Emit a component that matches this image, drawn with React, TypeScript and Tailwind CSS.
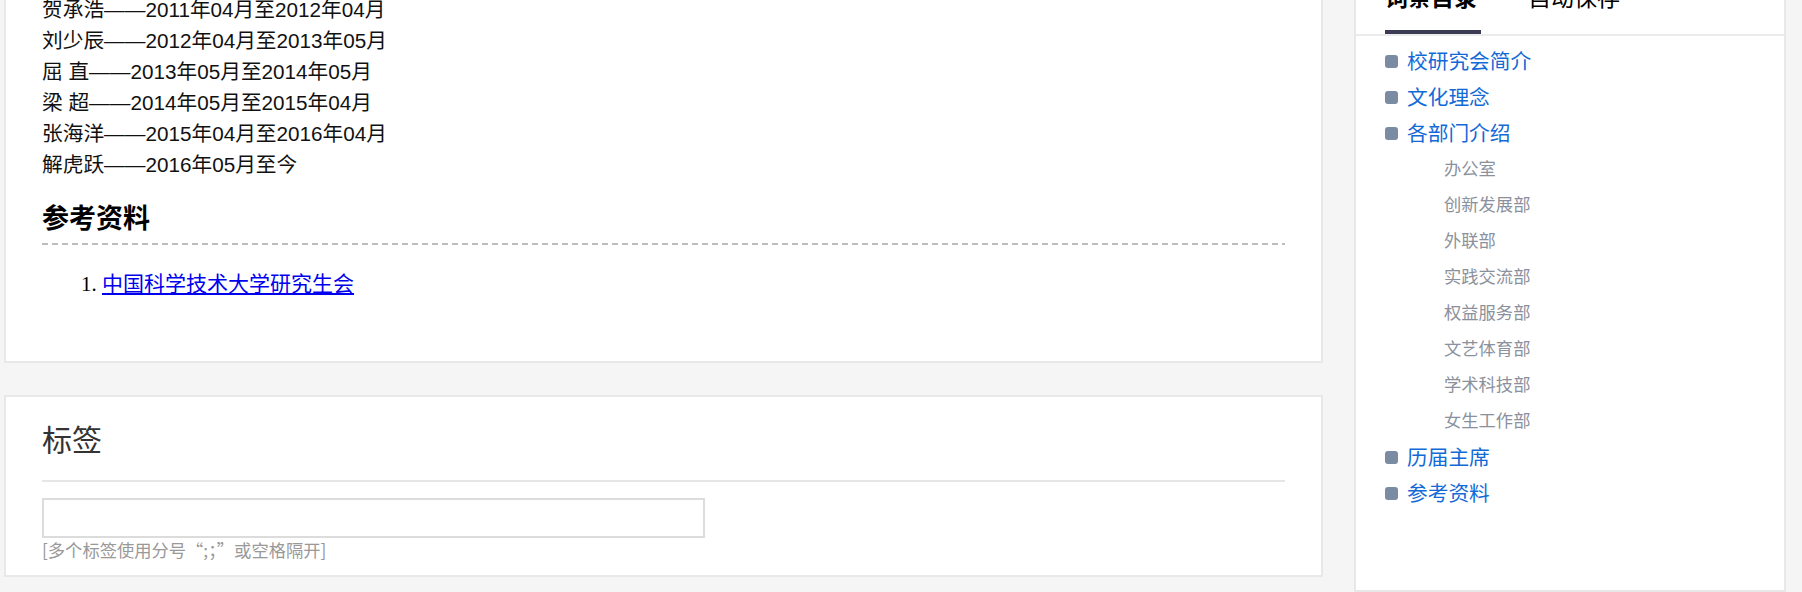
import React from "react";

const presidents = [
  "贺承浩——2011年04月至2012年04月",
  "刘少辰——2012年04月至2013年05月",
  "屈 直——2013年05月至2014年05月",
  "梁 超——2014年05月至2015年04月",
  "张海洋——2015年04月至2016年04月",
  "解虎跃——2016年05月至今",
];

type TocItem = { label: string; level: 1 | 2 };

const toc: TocItem[] = [
  { label: "校研究会简介", level: 1 },
  { label: "文化理念", level: 1 },
  { label: "各部门介绍", level: 1 },
  { label: "办公室", level: 2 },
  { label: "创新发展部", level: 2 },
  { label: "外联部", level: 2 },
  { label: "实践交流部", level: 2 },
  { label: "权益服务部", level: 2 },
  { label: "文艺体育部", level: 2 },
  { label: "学术科技部", level: 2 },
  { label: "女生工作部", level: 2 },
  { label: "历届主席", level: 1 },
  { label: "参考资料", level: 1 },
];

function Sidebar() {
  return (
    <aside className="mt-[-30px] h-[622px] w-[432px] shrink-0 border-2 border-[#e8e8e8] bg-white">
      <div className="flex gap-[47px] border-b-2 border-[#ebebeb] pl-[29px] pt-[11px]">
        <div className="w-[96px] border-b-4 border-[#3b3c54] pb-[17px] text-[23px] font-bold leading-[30px] text-black">
          词条目录
        </div>
        <div className="pb-[21px] text-[23px] leading-[30px] text-black">自动保存</div>
      </div>

      <ul className="pt-[7.5px] pl-[29px]">
        {toc.map((item) =>
          item.level === 1 ? (
            <li key={item.label} className="flex h-[36px] items-center gap-[9px]">
              <span className="h-[13px] w-[13px] rounded-[3px] bg-[#7a8ba3]" />
              <a href="#" className="text-[20.7px] text-[#136ad6]">
                {item.label}
              </a>
            </li>
          ) : (
            <li key={item.label} className="flex h-[36px] items-center pl-[59px]">
              <a href="#" className="text-[17.3px] text-[#8b919c]">
                {item.label}
              </a>
            </li>
          ),
        )}
      </ul>
    </aside>
  );
}

export default function App() {
  return (
    <main className="h-[592px] w-[1802px] overflow-hidden bg-[#f5f5f5] font-['Liberation_Sans','Noto_Sans_CJK_SC',sans-serif]">
      <div className="flex items-start gap-[31px] pl-[4px]">
        <div className="mt-[-41px] w-[1319px] shrink-0">
          {/* 正文卡片 */}
          <section className="border-2 border-[#e8e8e8] bg-white px-[36px] pt-[32.5px] pb-[62px]">
            <div className="text-[20.7px] leading-[31px] text-[#111]">
              {presidents.map((p) => (
                <p key={p}>{p}</p>
              ))}
            </div>

            <h2 className="mt-[21.5px] text-[27px] font-bold leading-[36px] text-black">参考资料</h2>
            <div className="mt-[6px] h-[2px] bg-[repeating-linear-gradient(90deg,#bdbdbd_0px,#bdbdbd_6px,transparent_6px,transparent_10px)]" />

            <ol className="mt-[22.5px] list-decimal pl-[60px] text-[21px] leading-[31px] marker:font-['Liberation_Serif'] marker:text-black">
              <li>
                <a href="#" className="text-[#0000ee] underline">
                  中国科学技术大学研究生会
                </a>
              </li>
            </ol>
          </section>

          {/* 标签卡片 */}
          <section className="mt-[32px] border-2 border-[#e8e8e8] bg-white px-[36px] pt-[24.5px] pb-[14.5px]">
            <h2 className="border-b-2 border-[#e6e6e6] pb-[19px] text-[30px] leading-[40px] text-[#333]">标签</h2>
            <input
              type="text"
              className="mt-[15.5px] block h-[40px] w-[663px] border-2 border-[#dcdcdc] bg-white outline-none"
            />
            <p className="mt-[2.5px] font-['Noto_Sans_CJK_SC'] text-[17.3px] leading-[20px] text-[#999]">
              [多个标签使用分号“;；”或空格隔开]
            </p>
          </section>
        </div>

        <Sidebar />
      </div>
    </main>
  );
}
